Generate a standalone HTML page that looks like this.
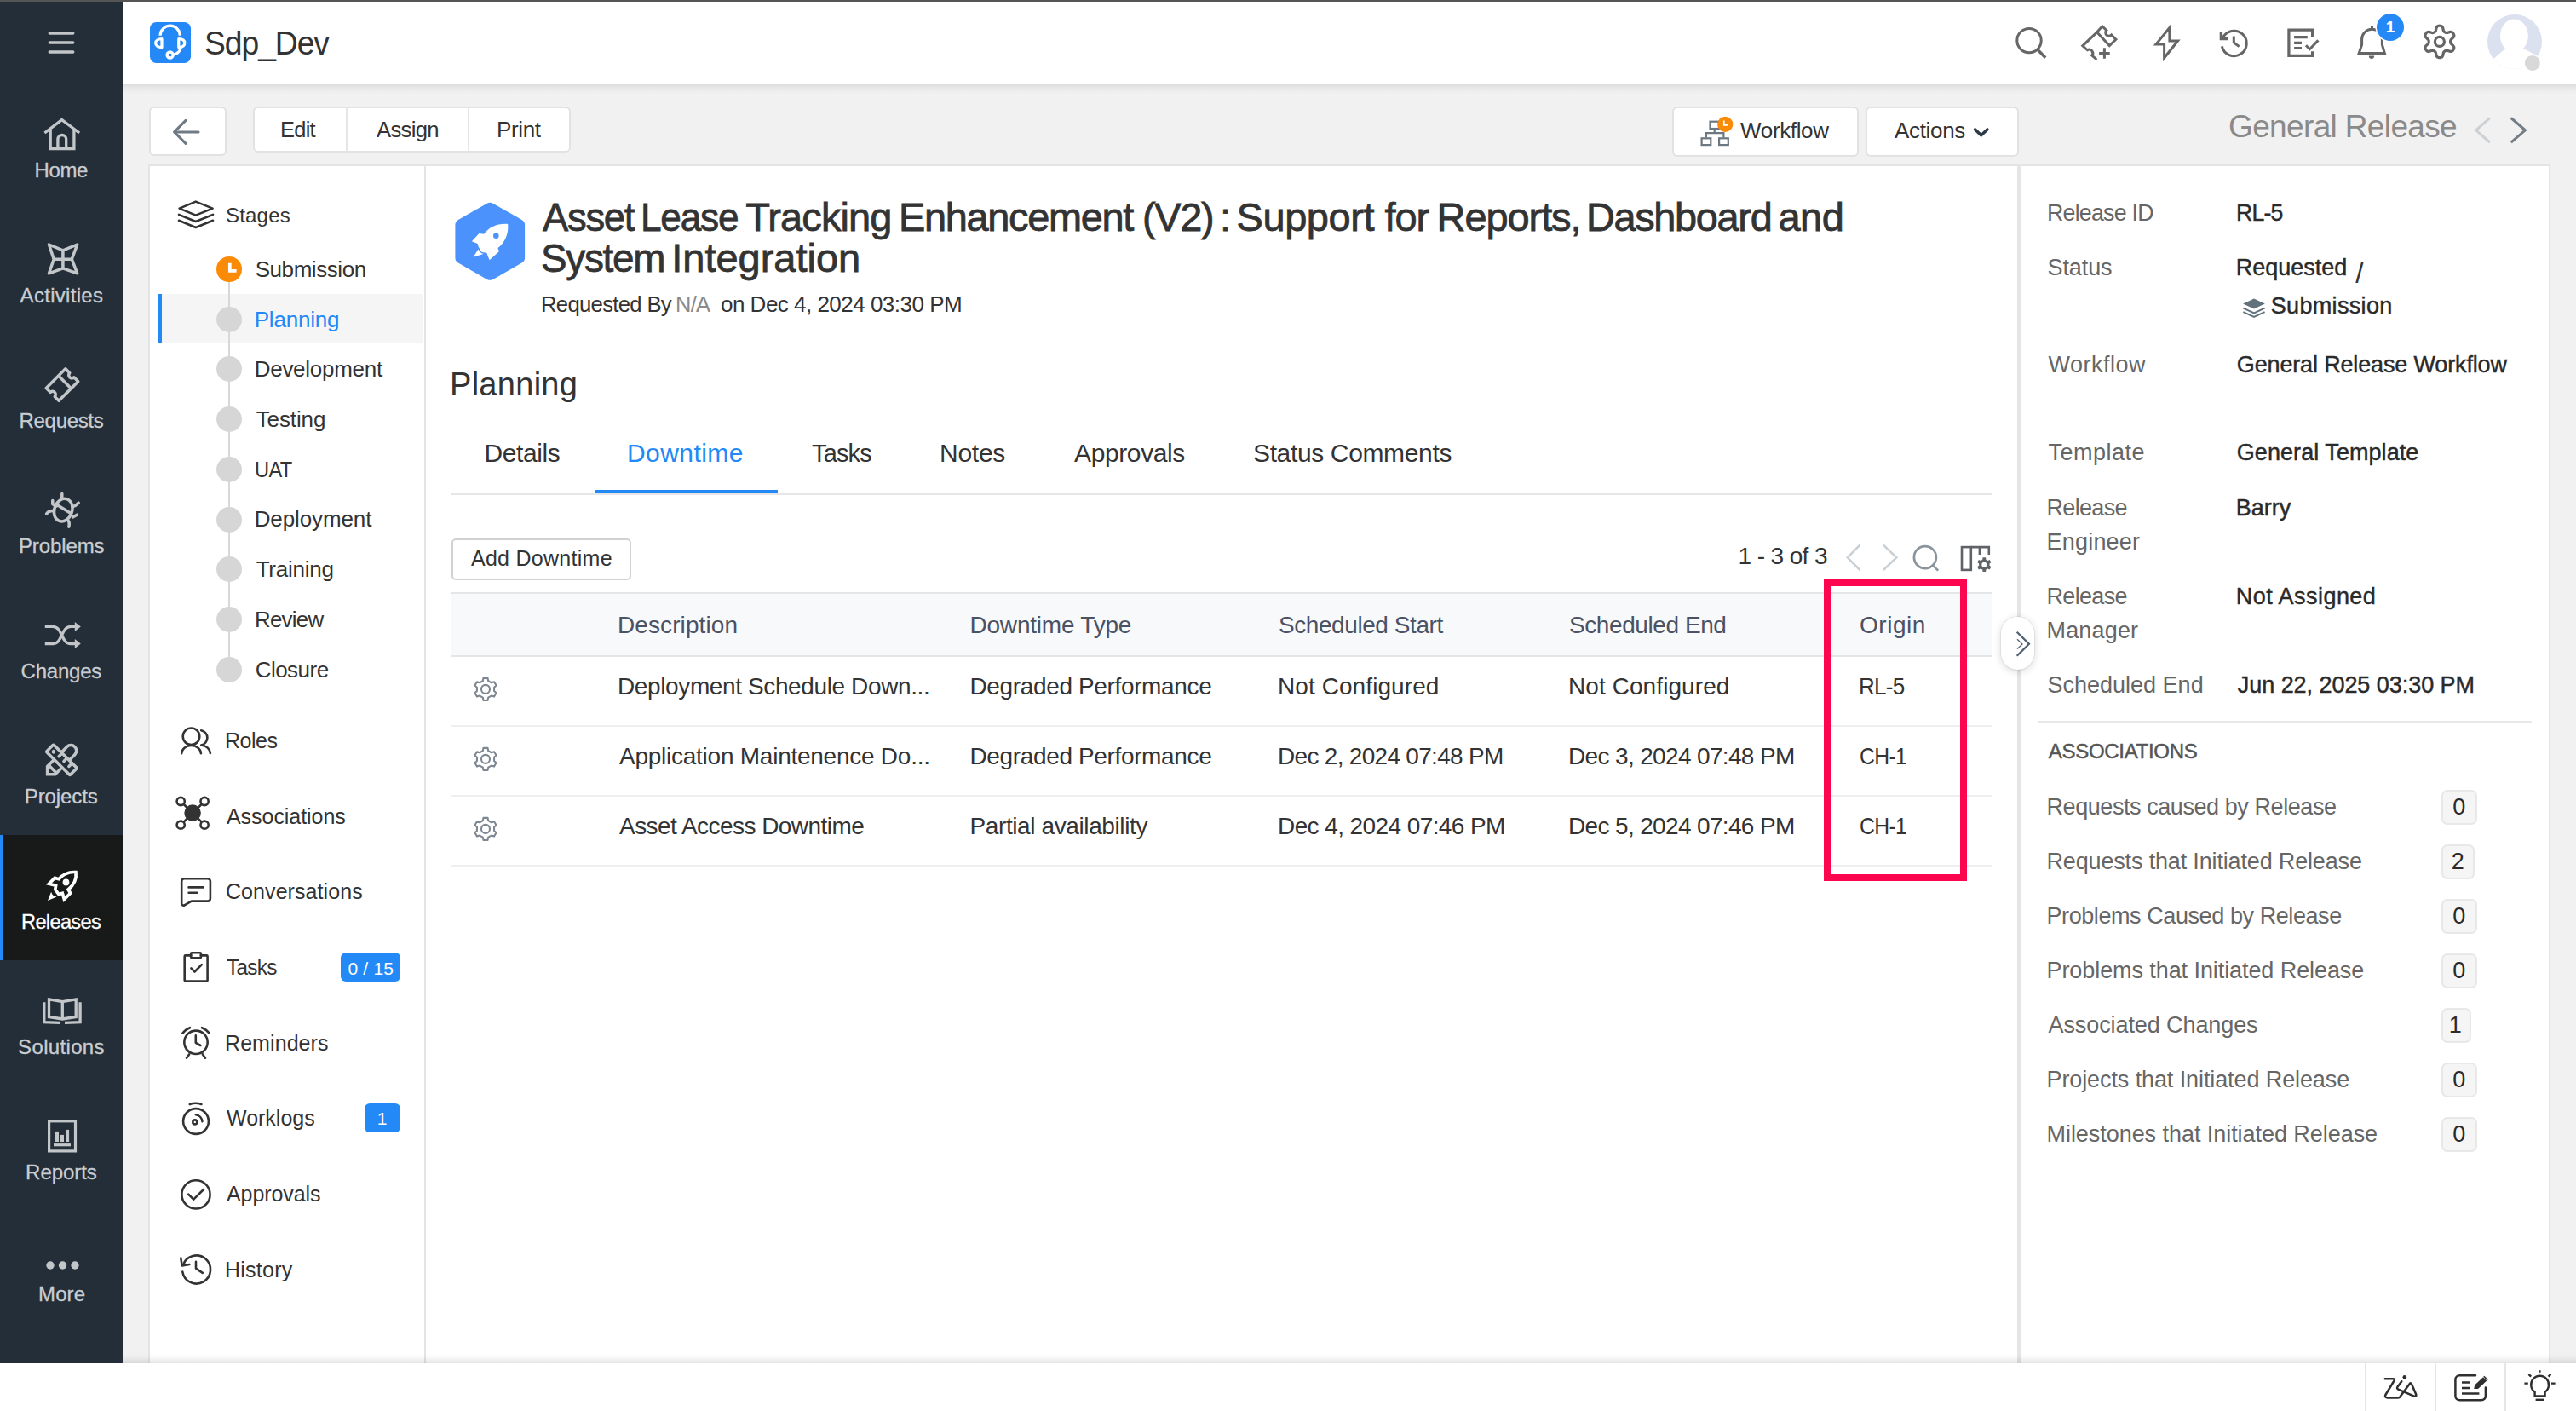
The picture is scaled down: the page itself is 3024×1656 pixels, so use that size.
<!DOCTYPE html>
<html lang="en"><head><meta charset="utf-8"><title>Sdp_Dev - Release RL-5</title>
<style>
html,body{margin:0;padding:0;}
body{width:3024px;height:1656px;overflow:hidden;background:#f1f1f1;font-family:"Liberation Sans",sans-serif;position:relative;}
.b{position:absolute;box-sizing:border-box;display:block;}
.t{position:absolute;white-space:nowrap;}
@media (max-width:1600px){html{zoom:0.5;}}
</style></head><body>
<div class="b" style="left:144px;top:0px;width:2880px;height:98px;background:#fff;"></div>
<div class="b" style="left:144px;top:98px;width:2880px;height:13px;background:linear-gradient(to bottom, rgba(0,0,0,0.095), rgba(0,0,0,0.045) 35%, rgba(0,0,0,0.012) 75%, rgba(0,0,0,0));"></div>
<div class="b" style="left:0px;top:0px;width:3024px;height:2px;background:#555;"></div>
<div class="b" style="left:0px;top:2px;width:144px;height:1598px;background:#242e38;"></div>
<div class="b" style="left:0px;top:980px;width:144px;height:147px;background:#181a1a;"></div>
<div class="b" style="left:0px;top:980px;width:4px;height:147px;background:#2289f6;"></div>
<div class="t" style="left:40.6px;top:188.3px;font-size:24px;line-height:24px;letter-spacing:-0.43px;color:#c9cdd1;-webkit-text-stroke:0.3px #c9cdd1;">Home</div>
<div class="t" style="left:23.6px;top:335.3px;font-size:24px;line-height:24px;letter-spacing:0.30px;color:#c9cdd1;-webkit-text-stroke:0.3px #c9cdd1;">Activities</div>
<div class="t" style="left:22.6px;top:482.3px;font-size:24px;line-height:24px;letter-spacing:-0.33px;color:#c9cdd1;-webkit-text-stroke:0.3px #c9cdd1;">Requests</div>
<div class="t" style="left:21.9px;top:629.3px;font-size:24px;line-height:24px;letter-spacing:-0.10px;color:#c9cdd1;-webkit-text-stroke:0.3px #c9cdd1;">Problems</div>
<div class="t" style="left:24.6px;top:776.3px;font-size:24px;line-height:24px;letter-spacing:-0.22px;color:#c9cdd1;-webkit-text-stroke:0.3px #c9cdd1;">Changes</div>
<div class="t" style="left:28.8px;top:923.3px;font-size:24px;line-height:24px;letter-spacing:-0.09px;color:#c9cdd1;-webkit-text-stroke:0.3px #c9cdd1;">Projects</div>
<div class="t" style="left:25.2px;top:1070.3px;font-size:24px;line-height:24px;letter-spacing:-0.67px;color:#fff;transform:scaleX(0.9831);transform-origin:0 0;-webkit-text-stroke:0.3px #fff;">Releases</div>
<div class="t" style="left:21.1px;top:1217.3px;font-size:24px;line-height:24px;letter-spacing:0.34px;color:#c9cdd1;-webkit-text-stroke:0.3px #c9cdd1;">Solutions</div>
<div class="t" style="left:30.1px;top:1364.3px;font-size:24px;line-height:24px;letter-spacing:-0.05px;color:#c9cdd1;-webkit-text-stroke:0.3px #c9cdd1;">Reports</div>
<div class="t" style="left:45.1px;top:1507.3px;font-size:24px;line-height:24px;letter-spacing:0.07px;color:#c9cdd1;-webkit-text-stroke:0.3px #c9cdd1;">More</div>
<div class="t" style="left:240.0px;top:30.6px;font-size:39px;line-height:39px;letter-spacing:-1.09px;color:#333;transform:scaleX(0.9547);transform-origin:0 0;">Sdp_Dev</div>
<div class="b" style="left:174.5px;top:124.5px;width:91px;height:58px;background:#fff;border:2px solid #e2e2e2;border-radius:6px;"></div>
<div class="b" style="left:296.5px;top:124.6px;width:373px;height:54px;background:#fff;border:2px solid #e2e2e2;border-radius:6px;"></div>
<div class="b" style="left:406.2px;top:124.6px;width:2px;height:54px;background:#e6e6e6;"></div>
<div class="b" style="left:549.4px;top:124.6px;width:2px;height:54px;background:#e6e6e6;"></div>
<div class="t" style="left:329.1px;top:138.9px;font-size:26px;line-height:26px;letter-spacing:-0.73px;color:#333;transform:scaleX(0.9781);transform-origin:0 0;">Edit</div>
<div class="t" style="left:442.2px;top:138.9px;font-size:26px;line-height:26px;letter-spacing:-0.73px;color:#333;transform:scaleX(0.9883);transform-origin:0 0;">Assign</div>
<div class="t" style="left:583.0px;top:138.9px;font-size:26px;line-height:26px;letter-spacing:-0.38px;color:#333;">Print</div>
<div class="b" style="left:1962.5px;top:124.5px;width:219px;height:59px;background:#fff;border:2px solid #e2e2e2;border-radius:6px;"></div>
<div class="b" style="left:2189.5px;top:124.5px;width:180px;height:59px;background:#fff;border:2px solid #e2e2e2;border-radius:6px;"></div>
<div class="t" style="left:2043.1px;top:140.4px;font-size:26px;line-height:26px;letter-spacing:-0.36px;color:#333;">Workflow</div>
<div class="t" style="left:2224.1px;top:140.4px;font-size:26px;line-height:26px;letter-spacing:-0.35px;color:#333;">Actions</div>
<div class="t" style="left:2616.0px;top:130.3px;font-size:37px;line-height:37px;letter-spacing:-0.64px;color:#8a8a8a;">General Release</div>
<div class="b" style="left:174px;top:193px;width:2820px;height:1407px;background:#fff;border:2px solid #e4e4e4;border-bottom:none;"></div>
<div class="b" style="left:498px;top:195px;width:2px;height:1405px;background:#e4e4e4;"></div>
<div class="b" style="left:2368px;top:195px;width:4px;height:1405px;background:#e5e5e5;"></div>
<div class="t" style="left:265.0px;top:241.3px;font-size:24px;line-height:24px;letter-spacing:0.20px;color:#333;">Stages</div>
<div class="b" style="left:185px;top:345px;width:311px;height:58px;background:#f5f5f5;"></div>
<div class="b" style="left:185px;top:345px;width:5px;height:58px;background:#2289f6;"></div>
<div class="b" style="left:268px;top:316px;width:2.4px;height:470px;background:#d8d8d8;"></div>
<div class="t" style="left:299.7px;top:302.9px;font-size:26px;line-height:26px;letter-spacing:-0.44px;color:#333;">Submission</div>
<div class="t" style="left:298.7px;top:361.6px;font-size:26px;line-height:26px;letter-spacing:-0.19px;color:#2289f6;">Planning</div>
<div class="b" style="left:254px;top:359.7px;width:30px;height:30px;background:#d6d6d6;border-radius:50%;"></div>
<div class="t" style="left:298.7px;top:420.3px;font-size:26px;line-height:26px;letter-spacing:-0.27px;color:#333;">Development</div>
<div class="b" style="left:254px;top:418.4px;width:30px;height:30px;background:#d6d6d6;border-radius:50%;"></div>
<div class="t" style="left:300.7px;top:479.0px;font-size:26px;line-height:26px;letter-spacing:-0.12px;color:#333;">Testing</div>
<div class="b" style="left:254px;top:477.1px;width:30px;height:30px;background:#d6d6d6;border-radius:50%;"></div>
<div class="t" style="left:298.9px;top:537.7px;font-size:26px;line-height:26px;letter-spacing:-0.73px;color:#333;transform:scaleX(0.9088);transform-origin:0 0;">UAT</div>
<div class="b" style="left:254px;top:535.8px;width:30px;height:30px;background:#d6d6d6;border-radius:50%;"></div>
<div class="t" style="left:298.7px;top:596.4px;font-size:26px;line-height:26px;letter-spacing:-0.11px;color:#333;">Deployment</div>
<div class="b" style="left:254px;top:594.5px;width:30px;height:30px;background:#d6d6d6;border-radius:50%;"></div>
<div class="t" style="left:300.7px;top:655.1px;font-size:26px;line-height:26px;letter-spacing:-0.24px;color:#333;">Training</div>
<div class="b" style="left:254px;top:653.2px;width:30px;height:30px;background:#d6d6d6;border-radius:50%;"></div>
<div class="t" style="left:298.7px;top:713.8px;font-size:26px;line-height:26px;letter-spacing:-0.73px;color:#333;transform:scaleX(0.9942);transform-origin:0 0;">Review</div>
<div class="b" style="left:254px;top:711.9000000000001px;width:30px;height:30px;background:#d6d6d6;border-radius:50%;"></div>
<div class="t" style="left:299.7px;top:772.5px;font-size:26px;line-height:26px;letter-spacing:-0.53px;color:#333;">Closure</div>
<div class="b" style="left:254px;top:770.6px;width:30px;height:30px;background:#d6d6d6;border-radius:50%;"></div>
<div class="b" style="left:254.2px;top:301px;width:29.8px;height:29.8px;background:#fb8a07;border-radius:50%;"></div>
<div class="t" style="left:264.0px;top:856.9px;font-size:25px;line-height:25px;letter-spacing:-0.50px;color:#333;">Roles</div>
<div class="t" style="left:266.0px;top:945.7px;font-size:25px;line-height:25px;letter-spacing:-0.05px;color:#333;">Associations</div>
<div class="t" style="left:265.0px;top:1034.4px;font-size:25px;line-height:25px;letter-spacing:0.07px;color:#333;">Conversations</div>
<div class="t" style="left:266.0px;top:1123.1px;font-size:25px;line-height:25px;letter-spacing:-0.70px;color:#333;transform:scaleX(0.9718);transform-origin:0 0;">Tasks</div>
<div class="t" style="left:264.0px;top:1211.7px;font-size:25px;line-height:25px;letter-spacing:0.08px;color:#333;">Reminders</div>
<div class="t" style="left:266.0px;top:1300.4px;font-size:25px;line-height:25px;letter-spacing:0.00px;color:#333;">Worklogs</div>
<div class="t" style="left:266.0px;top:1389.1px;font-size:25px;line-height:25px;letter-spacing:-0.09px;color:#333;">Approvals</div>
<div class="t" style="left:264.0px;top:1477.7px;font-size:25px;line-height:25px;letter-spacing:0.25px;color:#333;">History</div>
<div class="b" style="left:400px;top:1118px;width:70px;height:34px;background:#2289f6;border-radius:6px;"></div>
<div class="t" style="left:408.5px;top:1125.8px;font-size:21px;line-height:21px;letter-spacing:0.18px;color:#fff;">0 / 15</div>
<div class="b" style="left:428px;top:1295px;width:42px;height:34px;background:#2289f6;border-radius:6px;"></div>
<div class="t" style="left:442.8px;top:1302.3px;font-size:21px;line-height:21px;letter-spacing:0.00px;color:#fff;">1</div>
<div class="t" style="left:637.0px;top:230.8px;font-size:47px;line-height:47px;letter-spacing:-1.32px;color:#333;transform:scaleX(0.9657);transform-origin:0 0;-webkit-text-stroke:0.8px #333;">Asset</div>
<div class="t" style="left:751.9px;top:230.8px;font-size:47px;line-height:47px;letter-spacing:-1.32px;color:#333;transform:scaleX(0.9407);transform-origin:0 0;-webkit-text-stroke:0.8px #333;">Lease</div>
<div class="t" style="left:875.2px;top:230.8px;font-size:47px;line-height:47px;letter-spacing:-0.89px;color:#333;-webkit-text-stroke:0.8px #333;">Tracking</div>
<div class="t" style="left:1055.2px;top:230.8px;font-size:47px;line-height:47px;letter-spacing:-1.32px;color:#333;transform:scaleX(0.9980);transform-origin:0 0;-webkit-text-stroke:0.8px #333;">Enhancement</div>
<div class="t" style="left:1340.8px;top:230.8px;font-size:47px;line-height:47px;letter-spacing:-1.32px;color:#333;transform:scaleX(0.9969);transform-origin:0 0;-webkit-text-stroke:0.8px #333;">(V2)</div>
<div class="t" style="left:1431.9px;top:230.8px;font-size:47px;line-height:47px;letter-spacing:0.00px;color:#333;-webkit-text-stroke:0.8px #333;">:</div>
<div class="t" style="left:1451.6px;top:230.8px;font-size:47px;line-height:47px;letter-spacing:-0.45px;color:#333;-webkit-text-stroke:0.8px #333;">Support</div>
<div class="t" style="left:1625.6px;top:230.8px;font-size:47px;line-height:47px;letter-spacing:-1.20px;color:#333;-webkit-text-stroke:0.8px #333;">for</div>
<div class="t" style="left:1686.6px;top:230.8px;font-size:47px;line-height:47px;letter-spacing:-1.09px;color:#333;-webkit-text-stroke:0.8px #333;">Reports,</div>
<div class="t" style="left:1862.1px;top:230.8px;font-size:47px;line-height:47px;letter-spacing:-1.32px;color:#333;transform:scaleX(0.9969);transform-origin:0 0;-webkit-text-stroke:0.8px #333;">Dashboard</div>
<div class="t" style="left:2087.4px;top:230.8px;font-size:47px;line-height:47px;letter-spacing:-0.50px;color:#333;-webkit-text-stroke:0.8px #333;">and</div>
<div class="t" style="left:635.0px;top:278.8px;font-size:47px;line-height:47px;letter-spacing:-1.32px;color:#333;transform:scaleX(0.9760);transform-origin:0 0;-webkit-text-stroke:0.8px #333;">System</div>
<div class="t" style="left:788.3px;top:278.8px;font-size:47px;line-height:47px;letter-spacing:-0.02px;color:#333;-webkit-text-stroke:0.8px #333;">Integration</div>
<div class="t" style="left:634.6px;top:343.6px;font-size:26px;line-height:26px;letter-spacing:-0.73px;color:#333;transform:scaleX(0.9896);transform-origin:0 0;">Requested By</div>
<div class="t" style="left:793.0px;top:343.6px;font-size:26px;line-height:26px;letter-spacing:-0.73px;color:#8a8a8a;transform:scaleX(0.9767);transform-origin:0 0;">N/A</div>
<div class="t" style="left:846.0px;top:343.6px;font-size:26px;line-height:26px;letter-spacing:-0.51px;color:#333;">on Dec 4, 2024 03:30 PM</div>
<div class="t" style="left:528.0px;top:432.4px;font-size:38px;line-height:38px;letter-spacing:0.29px;color:#333;">Planning</div>
<div class="t" style="left:568.6px;top:516.8px;font-size:30px;line-height:30px;letter-spacing:-0.43px;color:#333;">Details</div>
<div class="t" style="left:736.0px;top:516.8px;font-size:30px;line-height:30px;letter-spacing:0.43px;color:#2289f6;">Downtime</div>
<div class="t" style="left:953.0px;top:516.8px;font-size:30px;line-height:30px;letter-spacing:-0.84px;color:#333;transform:scaleX(0.9637);transform-origin:0 0;">Tasks</div>
<div class="t" style="left:1103.0px;top:516.8px;font-size:30px;line-height:30px;letter-spacing:-0.25px;color:#333;">Notes</div>
<div class="t" style="left:1261.0px;top:516.8px;font-size:30px;line-height:30px;letter-spacing:-0.38px;color:#333;">Approvals</div>
<div class="t" style="left:1471.0px;top:516.8px;font-size:30px;line-height:30px;letter-spacing:-0.36px;color:#333;">Status Comments</div>
<div class="b" style="left:530px;top:579px;width:1808px;height:2px;background:#e6e6e6;"></div>
<div class="b" style="left:698px;top:575px;width:215px;height:4px;background:#2289f6;"></div>
<div class="b" style="left:530px;top:631.5px;width:211px;height:49px;background:#fff;border:2px solid #d2d2d2;border-radius:5px;"></div>
<div class="t" style="left:553.0px;top:643.4px;font-size:25px;line-height:25px;letter-spacing:0.27px;color:#333;">Add Downtime</div>
<div class="t" style="left:2040.5px;top:638.9px;font-size:28px;line-height:28px;letter-spacing:-0.61px;color:#333;">1 - 3 of 3</div>
<div class="b" style="left:530px;top:695px;width:1808px;height:76px;background:#f8f9fa;border-top:2px solid #e4e5e7;border-bottom:2px solid #e4e5e7;"></div>
<div class="t" style="left:725.0px;top:719.9px;font-size:28px;line-height:28px;letter-spacing:0.10px;color:#4b5264;">Description</div>
<div class="t" style="left:1138.5px;top:719.9px;font-size:28px;line-height:28px;letter-spacing:-0.21px;color:#4b5264;">Downtime Type</div>
<div class="t" style="left:1501.0px;top:719.9px;font-size:28px;line-height:28px;letter-spacing:-0.43px;color:#4b5264;">Scheduled Start</div>
<div class="t" style="left:1842.0px;top:719.9px;font-size:28px;line-height:28px;letter-spacing:-0.42px;color:#4b5264;">Scheduled End</div>
<div class="t" style="left:2183.0px;top:719.9px;font-size:28px;line-height:28px;letter-spacing:0.54px;color:#4b5264;">Origin</div>
<div class="t" style="left:725.0px;top:792.4px;font-size:28px;line-height:28px;letter-spacing:-0.38px;color:#333;">Deployment Schedule Down...</div>
<div class="t" style="left:1138.5px;top:792.4px;font-size:28px;line-height:28px;letter-spacing:-0.36px;color:#333;">Degraded Performance</div>
<div class="t" style="left:1500.0px;top:792.4px;font-size:28px;line-height:28px;letter-spacing:0.08px;color:#333;">Not Configured</div>
<div class="t" style="left:1841.0px;top:792.4px;font-size:28px;line-height:28px;letter-spacing:0.08px;color:#333;">Not Configured</div>
<div class="t" style="left:2182.1px;top:792.4px;font-size:28px;line-height:28px;letter-spacing:-0.78px;color:#333;transform:scaleX(0.9309);transform-origin:0 0;">RL-5</div>
<div class="b" style="left:530px;top:851px;width:1808px;height:2px;background:#efefef;"></div>
<div class="t" style="left:727.0px;top:874.4px;font-size:28px;line-height:28px;letter-spacing:-0.25px;color:#333;">Application Maintenence Do...</div>
<div class="t" style="left:1138.5px;top:874.4px;font-size:28px;line-height:28px;letter-spacing:-0.36px;color:#333;">Degraded Performance</div>
<div class="t" style="left:1500.0px;top:874.4px;font-size:28px;line-height:28px;letter-spacing:-0.70px;color:#333;">Dec 2, 2024 07:48 PM</div>
<div class="t" style="left:1841.0px;top:874.4px;font-size:28px;line-height:28px;letter-spacing:-0.65px;color:#333;">Dec 3, 2024 07:48 PM</div>
<div class="t" style="left:2183.1px;top:874.4px;font-size:28px;line-height:28px;letter-spacing:-0.78px;color:#333;transform:scaleX(0.8841);transform-origin:0 0;">CH-1</div>
<div class="b" style="left:530px;top:933px;width:1808px;height:2px;background:#efefef;"></div>
<div class="t" style="left:727.0px;top:956.4px;font-size:28px;line-height:28px;letter-spacing:-0.55px;color:#333;">Asset Access Downtime</div>
<div class="t" style="left:1138.5px;top:956.4px;font-size:28px;line-height:28px;letter-spacing:-0.39px;color:#333;">Partial availability</div>
<div class="t" style="left:1500.0px;top:956.4px;font-size:28px;line-height:28px;letter-spacing:-0.59px;color:#333;">Dec 4, 2024 07:46 PM</div>
<div class="t" style="left:1841.0px;top:956.4px;font-size:28px;line-height:28px;letter-spacing:-0.65px;color:#333;">Dec 5, 2024 07:46 PM</div>
<div class="t" style="left:2183.1px;top:956.4px;font-size:28px;line-height:28px;letter-spacing:-0.78px;color:#333;transform:scaleX(0.8841);transform-origin:0 0;">CH-1</div>
<div class="b" style="left:530px;top:1015px;width:1808px;height:2px;background:#efefef;"></div>
<div class="b" style="left:2140.8px;top:680.3px;width:168px;height:353.5px;border:8.5px solid #fc074f;"></div>
<div class="b" style="left:2349.3px;top:724px;width:39px;height:61.6px;background:#fff;border-radius:19.5px;box-shadow:0 0 0 1px rgba(0,0,0,0.05),0 2px 10px rgba(0,0,0,0.16);"></div>
<div class="t" style="left:2402.5px;top:236.7px;font-size:27px;line-height:27px;letter-spacing:-0.76px;color:#666;transform:scaleX(0.9904);transform-origin:0 0;">Release ID</div>
<div class="t" style="left:2624.9px;top:236.7px;font-size:27px;line-height:27px;letter-spacing:-0.76px;color:#2a2a2a;transform:scaleX(0.9854);transform-origin:0 0;-webkit-text-stroke:0.45px #2a2a2a;">RL-5</div>
<div class="t" style="left:2403.5px;top:300.7px;font-size:27px;line-height:27px;letter-spacing:-0.10px;color:#666;">Status</div>
<div class="t" style="left:2624.8px;top:300.7px;font-size:27px;line-height:27px;letter-spacing:-0.01px;color:#2a2a2a;-webkit-text-stroke:0.45px #2a2a2a;">Requested</div>
<div class="t" style="left:2765.3px;top:304.2px;font-size:33px;line-height:33px;letter-spacing:0.00px;color:#333;">/</div>
<div class="t" style="left:2665.7px;top:346.0px;font-size:27px;line-height:27px;letter-spacing:0.34px;color:#2a2a2a;-webkit-text-stroke:0.45px #2a2a2a;">Submission</div>
<div class="t" style="left:2404.5px;top:414.7px;font-size:27px;line-height:27px;letter-spacing:0.50px;color:#666;">Workflow</div>
<div class="t" style="left:2625.8px;top:414.7px;font-size:27px;line-height:27px;letter-spacing:-0.15px;color:#2a2a2a;-webkit-text-stroke:0.45px #2a2a2a;">General Release Workflow</div>
<div class="t" style="left:2404.5px;top:518.2px;font-size:27px;line-height:27px;letter-spacing:0.50px;color:#666;">Template</div>
<div class="t" style="left:2625.8px;top:518.2px;font-size:27px;line-height:27px;letter-spacing:0.06px;color:#2a2a2a;-webkit-text-stroke:0.45px #2a2a2a;">General Template</div>
<div class="t" style="left:2402.5px;top:582.5px;font-size:27px;line-height:27px;letter-spacing:-0.67px;color:#666;">Release</div>
<div class="t" style="left:2624.8px;top:582.5px;font-size:27px;line-height:27px;letter-spacing:-0.01px;color:#2a2a2a;-webkit-text-stroke:0.45px #2a2a2a;">Barry</div>
<div class="t" style="left:2402.5px;top:622.5px;font-size:27px;line-height:27px;letter-spacing:0.21px;color:#666;">Engineer</div>
<div class="t" style="left:2402.5px;top:686.7px;font-size:27px;line-height:27px;letter-spacing:-0.67px;color:#666;">Release</div>
<div class="t" style="left:2624.8px;top:686.7px;font-size:27px;line-height:27px;letter-spacing:0.45px;color:#2a2a2a;-webkit-text-stroke:0.45px #2a2a2a;">Not Assigned</div>
<div class="t" style="left:2402.5px;top:726.7px;font-size:27px;line-height:27px;letter-spacing:0.17px;color:#666;">Manager</div>
<div class="t" style="left:2403.5px;top:790.7px;font-size:27px;line-height:27px;letter-spacing:0.00px;color:#666;">Scheduled End</div>
<div class="t" style="left:2626.8px;top:790.7px;font-size:27px;line-height:27px;letter-spacing:-0.05px;color:#2a2a2a;-webkit-text-stroke:0.45px #2a2a2a;">Jun 22, 2025 03:30 PM</div>
<div class="b" style="left:2392px;top:846px;width:580px;height:2px;background:#e8e8e8;"></div>
<div class="t" style="left:2404.8px;top:869.6px;font-size:24px;line-height:24px;letter-spacing:-0.30px;color:#555;-webkit-text-stroke:0.5px #555;">ASSOCIATIONS</div>
<div class="t" style="left:2402.5px;top:934.0px;font-size:27px;line-height:27px;letter-spacing:-0.43px;color:#666;">Requests caused by Release</div>
<div class="b" style="left:2866px;top:926.5px;width:41.5px;height:41px;background:#f5f5f5;border:2px solid #e8e8e8;border-radius:7px;"></div>
<div class="t" style="left:2879.2px;top:934.0px;font-size:27px;line-height:27px;letter-spacing:0.00px;color:#2a2a2a;">0</div>
<div class="t" style="left:2402.5px;top:998.0px;font-size:27px;line-height:27px;letter-spacing:-0.16px;color:#666;">Requests that Initiated Release</div>
<div class="b" style="left:2866px;top:990.5px;width:38.7px;height:41px;background:#f5f5f5;border:2px solid #e8e8e8;border-radius:7px;"></div>
<div class="t" style="left:2877.8px;top:998.0px;font-size:27px;line-height:27px;letter-spacing:0.00px;color:#2a2a2a;">2</div>
<div class="t" style="left:2402.5px;top:1062.0px;font-size:27px;line-height:27px;letter-spacing:-0.42px;color:#666;">Problems Caused by Release</div>
<div class="b" style="left:2866px;top:1054.5px;width:41.5px;height:41px;background:#f5f5f5;border:2px solid #e8e8e8;border-radius:7px;"></div>
<div class="t" style="left:2879.2px;top:1062.0px;font-size:27px;line-height:27px;letter-spacing:0.00px;color:#2a2a2a;">0</div>
<div class="t" style="left:2402.5px;top:1126.0px;font-size:27px;line-height:27px;letter-spacing:-0.08px;color:#666;">Problems that Initiated Release</div>
<div class="b" style="left:2866px;top:1118.5px;width:41.5px;height:41px;background:#f5f5f5;border:2px solid #e8e8e8;border-radius:7px;"></div>
<div class="t" style="left:2879.2px;top:1126.0px;font-size:27px;line-height:27px;letter-spacing:0.00px;color:#2a2a2a;">0</div>
<div class="t" style="left:2404.5px;top:1190.0px;font-size:27px;line-height:27px;letter-spacing:-0.09px;color:#666;">Associated Changes</div>
<div class="b" style="left:2866px;top:1182.5px;width:34.5px;height:41px;background:#f5f5f5;border:2px solid #e8e8e8;border-radius:7px;"></div>
<div class="t" style="left:2874.8px;top:1190.0px;font-size:27px;line-height:27px;letter-spacing:0.00px;color:#2a2a2a;">1</div>
<div class="t" style="left:2402.5px;top:1254.0px;font-size:27px;line-height:27px;letter-spacing:-0.10px;color:#666;">Projects that Initiated Release</div>
<div class="b" style="left:2866px;top:1246.5px;width:41.5px;height:41px;background:#f5f5f5;border:2px solid #e8e8e8;border-radius:7px;"></div>
<div class="t" style="left:2879.2px;top:1254.0px;font-size:27px;line-height:27px;letter-spacing:0.00px;color:#2a2a2a;">0</div>
<div class="t" style="left:2402.5px;top:1318.0px;font-size:27px;line-height:27px;letter-spacing:-0.05px;color:#666;">Milestones that Initiated Release</div>
<div class="b" style="left:2866px;top:1310.5px;width:41.5px;height:41px;background:#f5f5f5;border:2px solid #e8e8e8;border-radius:7px;"></div>
<div class="t" style="left:2879.2px;top:1318.0px;font-size:27px;line-height:27px;letter-spacing:0.00px;color:#2a2a2a;">0</div>
<div class="b" style="left:0px;top:1600px;width:3024px;height:56px;background:#fff;"></div>
<div class="b" style="left:144px;top:1588px;width:2880px;height:12px;background:linear-gradient(to bottom, rgba(0,0,0,0), rgba(0,0,0,0.02) 40%, rgba(0,0,0,0.10));"></div>
<div class="b" style="left:2776px;top:1600px;width:2px;height:56px;background:#e6e6e6;"></div>
<div class="b" style="left:2858px;top:1600px;width:2px;height:56px;background:#e6e6e6;"></div>
<div class="b" style="left:2940px;top:1600px;width:2px;height:56px;background:#e6e6e6;"></div>
<svg class="b" style="left:0px;top:20px;" width="144" height="1480" viewBox="0 20 144 1480" fill="none"><g stroke="#c3c6c9" stroke-width="3.5" stroke-linecap="round" stroke-linejoin="round" stroke-width="4.6"><path d="M58.3 39H85.7"/><path d="M58.3 50H85.7"/><path d="M58.3 61H85.7"/></g><g stroke="#c3c6c9" stroke-width="3.3" stroke-linecap="butt" stroke-linejoin="miter"><path d="M52.4 156 L72.6 140.6 L93.2 156"/><path d="M59.2 151.5V174.6H86.9V151.5"/><path d="M67.9 174.6V163.4a4.9 4.9 0 0 1 9.8 0V174.6"/></g><g stroke="#c3c6c9" stroke-width="3.5" stroke-linecap="round" stroke-linejoin="round" stroke-width="3.6"><path d="M57.5 287 L73.9 293.8 L90.7 287 L84.3 304.2 L90.7 320.8 L73.9 314.9 L57.5 320.8 L63.2 304.2 Z"/><path d="M73.9 293.8V314.9M63.2 304.2H84.3"/></g><g stroke="#c3c6c9" stroke-width="3.5" stroke-linecap="round" stroke-linejoin="round" transform="translate(73 451.6) rotate(-45)"><path d="M-16 -10.5H16V-3.6A3.6 3.6 0 0 0 16 3.6V10.5H-16V3.6A3.6 3.6 0 0 0 -16 -3.6Z"/><path d="M4.4 -10.5V10.5" stroke-linecap="butt"/></g><g stroke="#c3c6c9" stroke-width="3.5" stroke-linecap="round" stroke-linejoin="round" stroke-width="3.4"><ellipse cx="74.2" cy="598.6" rx="10.4" ry="13.6" transform="rotate(20 74.2 598.6)"/><path d="M67 592.6 L82.8 602.2"/><path d="M72.8 579.6 V584.5"/><path d="M61.8 587.6 V591.6 L66.2 594"/><path d="M54.6 603 C56.5 600.5 59 598.8 63.6 599.8"/><path d="M92.2 590.2 C90 592.5 88 594 85.4 594.6"/><path d="M90.4 604.2 L85.4 607"/><path d="M80.9 618.2 C81.6 615 81.8 612 79 609.8"/></g><g stroke="#c3c6c9" stroke-width="3.3" stroke-linecap="butt" stroke-linejoin="miter" stroke-width="3.5"><path d="M52.8 735.4H62C73.5 735.4 71.5 755.6 83 755.6H89"/><path d="M52.8 755.6H62C73.5 755.6 71.5 735.4 83 735.4H89"/></g><path d="M87.8 729.9 L94.8 735.4 L87.8 740.9Z M87.8 750.1 L94.8 755.6 L87.8 761.1Z" fill="#c3c6c9"/><g stroke="#c3c6c9" stroke-width="3.5" stroke-linecap="round" stroke-linejoin="round" stroke-width="3.4" transform="translate(55.6 908.7) rotate(-45)"><path d="M0 0 L6.5 -6.5 H39 A6.5 6.5 0 0 1 39 6.5 H6.5 Z" stroke-linejoin="miter"/><path d="M8.6 -6.5V6.5" stroke-linecap="butt"/></g><g stroke="#c3c6c9" stroke-width="3.5" stroke-linecap="round" stroke-linejoin="round" stroke-width="3.4" transform="translate(72.4 891.85) rotate(45)"><rect x="-19.5" y="-5.9" width="39" height="11.8" rx="1" fill="#242e38"/><circle cx="-13.5" cy="0" r="2.3" fill="#c3c6c9" stroke="none"/><path d="M-5.3 -5.9V-0.6M3 -5.9V-0.6M11.4 -5.9V-0.6"/></g><g stroke="#fff" stroke-width="3.7" stroke-linejoin="miter" stroke-linecap="round"><path d="M89 1023.6 C90.2 1032.5 86.5 1039 80.1 1044 L82.6 1048.3 L75.4 1055.5 L73.3 1048.3 L69 1049.6 L64.8 1044 L65.6 1039.3 L57.5 1037.2 L64.3 1030.4 L69 1031.7 C74 1026 81 1023 89 1023.6 Z"/></g><circle cx="77.5" cy="1035.5" r="3.9" fill="#fff"/><path d="M60.1 1046.8 C61 1050 63 1052 66.6 1052.6 L56 1057 Z" fill="#fff"/><g stroke="#c3c6c9" stroke-width="3.3" stroke-linecap="butt" stroke-linejoin="miter" stroke-width="2.9"><path d="M57.5 1172.9 L73.3 1175.6 L89.2 1172.9 V1193.5 L73.3 1196 L57.5 1193.5 Z"/><path d="M73.3 1175.6V1196"/></g><g stroke="#c3c6c9" stroke-width="3.3" stroke-linecap="butt" stroke-linejoin="miter" stroke-width="2.5"><path d="M51.8 1176.3V1199.7L70.7 1200.3"/><path d="M94.1 1176.3V1199.7L76 1200.3"/></g><rect x="57.6" y="1315.8" width="30.9" height="35.1" stroke="#c3c6c9" stroke-width="3.2"/><g fill="#c3c6c9"><rect x="65" y="1327.9" width="4" height="12.1"/><rect x="70.9" y="1331.9" width="4.1" height="8.1"/><rect x="77.1" y="1325.9" width="4" height="14.1"/><rect x="63" y="1342.1" width="20" height="3.2"/><circle cx="59" cy="1485" r="4.7"/><circle cx="73.5" cy="1485" r="4.7"/><circle cx="88" cy="1485" r="4.7"/></g></svg>
<svg class="b" style="left:170px;top:20px;" width="60" height="60" viewBox="170 20 60 60" fill="none"><rect x="176" y="26" width="48" height="48" rx="7.5" fill="#2488f7"/><g stroke="#fff" stroke-width="3.2" stroke-linecap="butt"><path d="M188.1 41.8A11.6 11.6 0 0 1 211.3 41.8"/><path d="M190 45.7V55.6C185.5 55.6 182.6 53.6 182.6 50.6S185.5 45.7 190 45.7Z" stroke-linejoin="round"/><path d="M209.8 45.7V55.6C214.3 55.6 216.8 53.6 216.8 50.6S214.3 45.7 209.8 45.7Z" stroke-linejoin="round"/><path d="M212.4 56.4C211 60.5 208 63 203.6 64"/><circle cx="199.6" cy="64.5" r="3.6"/></g></svg>
<svg class="b" style="left:2350px;top:8px;" width="660" height="84" viewBox="2350 8 660 84" fill="none"><g stroke="#666" stroke-width="3" stroke-linecap="butt" stroke-linejoin="miter"><circle cx="2382" cy="47.6" r="14.2"/><path d="M2392 58.2 L2401.2 67.8" stroke-width="3.4"/><path d="M2461.6 37.8 L2467.9 30.8 L2472.8 35.5 A3.9 3.9 0 0 0 2478.6 40.9 L2483.9 46.25 L2476.3 53.6 Z"/><path d="M2461.6 37.8 L2444.8 53.8 L2450.4 58.75 A4.2 4.2 0 0 1 2455.8 65 L2461.4 70"/><path d="M2470.4 56.2V68.8M2464.1 62.5H2476.7"/><path d="M2546.9 32.5 V48 H2556.6 L2540.6 68 V52.1 H2530.9 Z"/><path d="M2609.2 44.9 A14.7 14.7 0 1 1 2608.3 54.4"/><path d="M2607.4 37.8V45.6H2615.8" stroke-width="3.4"/><path d="M2622.3 42.5V50L2628.6 54.6"/><path d="M2714.6 44V35.1H2686.9V65.4H2714.6V60.3" stroke-width="3.2"/><path d="M2693.1 43.6H2708.8M2693.1 50.3H2702M2693.1 56.5H2702" stroke-width="3.2"/><path d="M2707 53.2 L2711.4 57.7 L2721.4 47.4"/><path d="M2769.2 62.6 L2772.6 52.5 V46.2 a11.9 11.9 0 0 1 23.8 0 V52.5 L2799.4 62.6 Z"/><path d="M2784.5 30.6V34.5"/></g><path d="M2780.8 65.6 H2787.2 A3.2 3.4 0 0 1 2780.8 65.6Z" fill="#666"/><circle cx="2806" cy="32" r="17.5" fill="#fff"/><circle cx="2806" cy="32" r="16" fill="#2488f7"/><path d="M2876.60 48.90 L2876.61 49.34 L2876.65 49.79 L2876.73 50.25 L2876.90 50.73 L2877.23 51.25 L2877.80 51.85 L2878.61 52.57 L2879.51 53.38 L2880.25 54.21 L2880.68 55.01 L2880.84 55.74 L2880.80 56.42 L2880.64 57.06 L2880.40 57.67 L2880.09 58.25 L2879.74 58.80 L2879.34 59.31 L2878.87 59.77 L2878.30 60.15 L2877.58 60.38 L2876.67 60.40 L2875.58 60.18 L2874.43 59.81 L2873.41 59.46 L2872.60 59.27 L2871.98 59.25 L2871.48 59.34 L2871.04 59.49 L2870.64 59.69 L2870.25 59.90 L2869.87 60.13 L2869.50 60.38 L2869.15 60.68 L2868.82 61.07 L2868.53 61.62 L2868.29 62.41 L2868.08 63.47 L2867.83 64.66 L2867.47 65.71 L2867.00 66.49 L2866.44 66.99 L2865.83 67.30 L2865.20 67.48 L2864.55 67.57 L2863.90 67.60 L2863.25 67.57 L2862.60 67.48 L2861.97 67.30 L2861.36 66.99 L2860.80 66.49 L2860.33 65.71 L2859.97 64.66 L2859.72 63.47 L2859.51 62.41 L2859.27 61.62 L2858.98 61.07 L2858.65 60.68 L2858.30 60.38 L2857.93 60.13 L2857.55 59.90 L2857.16 59.69 L2856.76 59.49 L2856.32 59.34 L2855.82 59.25 L2855.20 59.27 L2854.39 59.46 L2853.37 59.81 L2852.22 60.18 L2851.13 60.40 L2850.22 60.38 L2849.50 60.15 L2848.93 59.77 L2848.46 59.31 L2848.06 58.80 L2847.71 58.25 L2847.40 57.67 L2847.16 57.06 L2847.00 56.42 L2846.96 55.74 L2847.12 55.01 L2847.55 54.21 L2848.29 53.38 L2849.19 52.57 L2850.00 51.85 L2850.57 51.25 L2850.90 50.73 L2851.07 50.25 L2851.15 49.79 L2851.19 49.34 L2851.20 48.90 L2851.19 48.46 L2851.15 48.01 L2851.07 47.55 L2850.90 47.07 L2850.57 46.55 L2850.00 45.95 L2849.19 45.23 L2848.29 44.42 L2847.55 43.59 L2847.12 42.79 L2846.96 42.06 L2847.00 41.38 L2847.16 40.74 L2847.40 40.13 L2847.71 39.55 L2848.06 39.00 L2848.46 38.49 L2848.93 38.03 L2849.50 37.65 L2850.22 37.42 L2851.13 37.40 L2852.22 37.62 L2853.37 37.99 L2854.39 38.34 L2855.20 38.53 L2855.82 38.55 L2856.32 38.46 L2856.76 38.31 L2857.16 38.11 L2857.55 37.90 L2857.93 37.67 L2858.30 37.42 L2858.65 37.12 L2858.98 36.73 L2859.27 36.18 L2859.51 35.39 L2859.72 34.33 L2859.97 33.14 L2860.33 32.09 L2860.80 31.31 L2861.36 30.81 L2861.97 30.50 L2862.60 30.32 L2863.25 30.23 L2863.90 30.20 L2864.55 30.23 L2865.20 30.32 L2865.83 30.50 L2866.44 30.81 L2867.00 31.31 L2867.47 32.09 L2867.83 33.14 L2868.08 34.33 L2868.29 35.39 L2868.53 36.18 L2868.82 36.73 L2869.15 37.12 L2869.50 37.42 L2869.87 37.67 L2870.25 37.90 L2870.64 38.11 L2871.04 38.31 L2871.48 38.46 L2871.98 38.55 L2872.60 38.53 L2873.41 38.34 L2874.43 37.99 L2875.58 37.62 L2876.67 37.40 L2877.58 37.42 L2878.30 37.65 L2878.87 38.03 L2879.34 38.49 L2879.74 39.00 L2880.09 39.55 L2880.40 40.13 L2880.64 40.74 L2880.80 41.38 L2880.84 42.06 L2880.68 42.79 L2880.25 43.59 L2879.51 44.42 L2878.61 45.23 L2877.80 45.95 L2877.23 46.55 L2876.90 47.07 L2876.73 47.55 L2876.65 48.01 L2876.61 48.46 Z" stroke="#666" stroke-width="3.2" stroke-linejoin="round"/><circle cx="2863.9" cy="48.9" r="5.5" stroke="#666" stroke-width="3.2"/><clipPath id="avc"><circle cx="2952" cy="49" r="32"/></clipPath><g clip-path="url(#avc)"><rect x="2918" y="15" width="70" height="70" fill="#dbe1ee"/><ellipse cx="2951.4" cy="42" rx="16.4" ry="19.6" fill="#fff"/><path d="M2941 57 L2926.5 69.8 L2926 90 H2985 L2979 65.8 L2962.5 57 Z" fill="#fff"/></g><circle cx="2972.8" cy="73.9" r="9" fill="#d8d8d8"/></svg>
<div class="t" style="left:2800px;top:21px;width:12px;text-align:center;font-size:19px;line-height:22px;font-weight:bold;color:#fff;">1</div>
<svg class="b" style="left:196px;top:134px;" width="46" height="42" viewBox="196 134 46 42" fill="none"><g stroke="#6f7a85" stroke-width="3" stroke-linecap="round" stroke-linejoin="round"><path d="M218 141.4 L204.6 154.9 L218 168.4"/><path d="M205 154.9H233"/></g></svg>
<svg class="b" style="left:1990px;top:134px;" width="48" height="40" viewBox="1990 134 48 40" fill="none"><g stroke="#6b7882" stroke-width="2.2"><rect x="1997.6" y="162.3" width="10.7" height="7.8"/><rect x="2018.1" y="162.3" width="10.7" height="7.8"/><rect x="2007.5" y="142.7" width="10.5" height="8.3"/><path d="M2012.7 151V156.1M2002.9 161.2V156.1H2023.4V161.2"/></g><circle cx="2025.2" cy="145.9" r="9.1" fill="#fb8a07"/><path d="M2023.8 141.4V146.9H2028" stroke="#fff" stroke-width="1.7"/></svg>
<svg class="b" style="left:2312px;top:146px;" width="28" height="20" viewBox="2312 146 28 20" fill="none"><path d="M2318.6 152 L2325.7 158.7 L2332.9 152" stroke="#2e3a46" stroke-width="3.6" stroke-linecap="round" stroke-linejoin="round"/></svg>
<svg class="b" style="left:2900px;top:132px;" width="72" height="42" viewBox="2900 132 72 42" fill="none"><path d="M2922.8 138.5 L2906.6 152.8 L2922.8 167.2" stroke="#cdd0d2" stroke-width="3"/><path d="M2947.8 138.5 L2964.4 152.8 L2947.8 167.2" stroke="#737d86" stroke-width="3"/></svg>
<svg class="b" style="left:204px;top:230px;" width="84" height="96" viewBox="204 230 84 96" fill="none"><g stroke="#333" stroke-width="2.6" stroke-linejoin="round" stroke-linecap="round"><path d="M210.6 244.6 L229.8 236.6 L249.6 244.6 L229.8 252.6 Z"/><path d="M210 251.9 L229.8 260 L250 251.9"/><path d="M210 258.8 L229.8 267 L250 258.8"/></g><path d="M269.8 308.8V317.9H277.6" stroke="#fff" stroke-width="3.7"/></svg>
<svg class="b" style="left:200px;top:846px;" width="56" height="670" viewBox="200 846 56 670" fill="none"><g stroke="#333" stroke-width="2.6" stroke-linecap="round" stroke-linejoin="round"><circle cx="224.5" cy="864.3" r="9.8"/><path d="M213.2 884.2 A11.35 9.2 0 0 1 235.9 884.2"/><path d="M236.2 857.2 A8.8 8.8 0 0 1 236.2 874.5"/><path d="M237 874.8 A10.6 10.2 0 0 1 246.9 884"/><path d="M212.2 940.5 L240.1 968.2 M240.1 940.5 L212.2 968.2"/><circle cx="212.2" cy="940.5" r="4.6" fill="#fff"/><circle cx="240.1" cy="940.5" r="4.6" fill="#fff"/><circle cx="212.2" cy="968.2" r="4.6" fill="#fff"/><circle cx="240.1" cy="968.2" r="4.6" fill="#fff"/><circle cx="226.1" cy="954.1" r="9.8" fill="#333" stroke="none"/><path d="M216.2 1031.2 H243.9 A3 3 0 0 1 246.9 1034.2 V1054.6 A3 3 0 0 1 243.9 1057.6 H224.7 L216.6 1062.3 A2.2 2.2 0 0 1 213.2 1060.4 V1034.2 A3 3 0 0 1 216.2 1031.2 Z"/><path d="M221.6 1041.4H238.4M221.6 1047.8H231.4"/><path d="M224.2 1121.4H217.7A1 1 0 0 0 216.7 1122.4V1150.5A1 1 0 0 0 217.7 1151.5H242.6A1 1 0 0 0 243.6 1150.5V1122.4A1 1 0 0 0 242.6 1121.4H235.9"/><rect x="224.2" y="1118.2" width="11.7" height="6" rx="1"/><path d="M224.4 1136.4 L228.5 1140.5 L236.8 1132.2"/><circle cx="230" cy="1223.3" r="13.7"/><path d="M214.3 1212.7 A19.2 19.2 0 0 1 223 1206.2"/><path d="M237 1206.2 A19.2 19.2 0 0 1 245.7 1212.7"/><path d="M222.1 1237.4 L219 1241.7 M237.9 1237.4 L241 1241.7"/><path d="M229.8 1215.4V1223.8L235.4 1227"/><circle cx="230" cy="1316" r="14.9"/><path d="M222.8 1296 Q229.6 1293.6 236.4 1296"/><circle cx="228.8" cy="1316.9" r="2.5"/><path d="M229.8 1308.2 A8.8 8.8 0 0 1 237.4 1316.2"/><circle cx="230" cy="1401.9" r="16.6"/><path d="M221.2 1401.6 L227.2 1407.7 L239 1396"/><path d="M215 1484.6 A16.5 16.5 0 1 1 214.3 1492.6"/><path d="M212.3 1476.6 L213.7 1485.4 L222.4 1484"/><path d="M230 1480.8V1488.6L237.8 1493.8"/></g></svg>
<svg class="b" style="left:528px;top:232px;" width="96" height="104" viewBox="528 232 96 104" fill="none"><path d="M575.2 244.8 L609.1 264.0 L609.1 302.5 L575.2 321.8 L541.4 302.5 L541.4 264.0 Z" fill="#4b92fc" stroke="#4b92fc" stroke-width="14" stroke-linejoin="round"/><path d="M596.2 262.9 C597.4 274 592.5 285 584.4 291 L586 295.1 L574.6 305.3 L571.3 296.7 L565.6 295.9 L561.6 289.4 L560.7 286.1 L553.8 283.3 L562.4 273.9 L568.1 274.7 C574 266.5 584 262 596.2 262.9 Z" fill="#fff"/><circle cx="582.3" cy="276.8" r="3.3" fill="#4b92fc"/><path d="M561.4 292.4 C562.5 295 564.5 297 567.5 297.9 L555.7 301.8 Z" fill="#fff"/></svg>
<svg class="b" style="left:552px;top:790px;" width="36" height="36" viewBox="552 790 36 36" fill="none"><path d="M566.82 799.10 L567.51 795.84 L572.49 795.84 L573.18 799.10 L576.89 801.25 L580.07 800.21 L582.56 804.53 L580.07 806.76 L580.07 811.04 L582.56 813.27 L580.07 817.59 L576.89 816.55 L573.18 818.70 L572.49 821.96 L567.51 821.96 L566.82 818.70 L563.11 816.55 L559.93 817.59 L557.44 813.27 L559.93 811.04 L559.93 806.76 L557.44 804.53 L559.93 800.21 L563.11 801.25 Z" stroke="#7d8892" stroke-width="2.1" stroke-linejoin="round"/><circle cx="570" cy="808.9" r="5" stroke="#7d8892" stroke-width="2.1"/></svg>
<svg class="b" style="left:552px;top:872px;" width="36" height="36" viewBox="552 872 36 36" fill="none"><path d="M566.82 881.10 L567.51 877.84 L572.49 877.84 L573.18 881.10 L576.89 883.25 L580.07 882.21 L582.56 886.53 L580.07 888.76 L580.07 893.04 L582.56 895.27 L580.07 899.59 L576.89 898.55 L573.18 900.70 L572.49 903.96 L567.51 903.96 L566.82 900.70 L563.11 898.55 L559.93 899.59 L557.44 895.27 L559.93 893.04 L559.93 888.76 L557.44 886.53 L559.93 882.21 L563.11 883.25 Z" stroke="#7d8892" stroke-width="2.1" stroke-linejoin="round"/><circle cx="570" cy="890.9" r="5" stroke="#7d8892" stroke-width="2.1"/></svg>
<svg class="b" style="left:552px;top:954px;" width="36" height="36" viewBox="552 954 36 36" fill="none"><path d="M566.82 963.10 L567.51 959.84 L572.49 959.84 L573.18 963.10 L576.89 965.25 L580.07 964.21 L582.56 968.53 L580.07 970.76 L580.07 975.04 L582.56 977.27 L580.07 981.59 L576.89 980.55 L573.18 982.70 L572.49 985.96 L567.51 985.96 L566.82 982.70 L563.11 980.55 L559.93 981.59 L557.44 977.27 L559.93 975.04 L559.93 970.76 L557.44 968.53 L559.93 964.21 L563.11 965.25 Z" stroke="#7d8892" stroke-width="2.1" stroke-linejoin="round"/><circle cx="570" cy="972.9" r="5" stroke="#7d8892" stroke-width="2.1"/></svg>
<svg class="b" style="left:2160px;top:632px;" width="184" height="44" viewBox="2160 632 184 44" fill="none"><path d="M2183.4 639.6 L2168.8 654.3 L2183.4 669" stroke="#c8cfd5" stroke-width="2.5"/><path d="M2210.9 639.6 L2226.3 654.3 L2210.9 669" stroke="#c8cfd5" stroke-width="2.5"/><circle cx="2259.9" cy="654.1" r="13" stroke="#8a949c" stroke-width="2.7"/><path d="M2268.8 663.4 L2275.2 669.6" stroke="#8a949c" stroke-width="2.7"/><g stroke="#5f6368" stroke-width="2.6"><rect x="2303" y="642.1" width="10.8" height="26.8"/><path d="M2313.8 642.1H2334.8V651M2323.9 642.1V651"/></g><path d="M2327.23 656.70 L2327.51 654.24 L2331.09 654.24 L2331.37 656.70 L2333.42 657.88 L2335.69 656.90 L2337.48 659.99 L2335.49 661.47 L2335.49 663.83 L2337.48 665.31 L2335.69 668.40 L2333.42 667.42 L2331.37 668.60 L2331.09 671.06 L2327.51 671.06 L2327.23 668.60 L2325.18 667.42 L2322.91 668.40 L2321.12 665.31 L2323.11 663.83 L2323.11 661.47 L2321.12 659.99 L2322.91 656.90 L2325.18 657.88 Z M2332.3 662.65 a3 3 0 1 0 -6 0 a3 3 0 1 0 6 0Z" fill="#5f6368" fill-rule="evenodd"/></svg>
<svg class="b" style="left:2360px;top:736px;" width="28" height="40" viewBox="2360 736 28 40" fill="none"><path d="M2367.7 741.8 L2381.9 755.7 L2367.7 769.8" stroke="#4f6172" stroke-width="2.3"/><path d="M2368 750.2 L2374 755.9 L2368 761.6" stroke="#4f6172" stroke-width="1.3"/></svg>
<svg class="b" style="left:2630px;top:346px;" width="32" height="30" viewBox="2630 346 32 30" fill="none"><path d="M2633.2 356.4 L2646 350.4 L2658.8 356.4 L2646 362.4 Z" fill="#62727d"/><path d="M2633.4 361.6 L2646 367.4 L2658.6 361.6 M2633.4 366.2 L2646 372 L2658.6 366.2" stroke="#62727d" stroke-width="2"/></svg>
<svg class="b" style="left:2790px;top:1604px;" width="220" height="48" viewBox="2790 1604 220 48" fill="none"><g stroke="#2f2f2f" stroke-width="2.5" stroke-linecap="round" stroke-linejoin="round"><path d="M2799.8 1618.2 H2809 Q2811.6 1618.2 2810.4 1620.6 L2800.4 1637 Q2799 1640.2 2802.4 1640.4 H2815 Q2816.8 1640.4 2817.8 1638.8 L2828.6 1624.2 Q2830.2 1622.2 2831.2 1624.8 L2836.2 1636.6 Q2837 1639.4 2834 1638.6 L2815.4 1630.6 Q2813.2 1629.4 2814.6 1627.4 L2819.3 1621.3"/></g><circle cx="2822.8" cy="1616.2" r="2.3" fill="#2f2f2f"/><g stroke="#2f2f2f" stroke-width="2.5" stroke-linecap="round" stroke-linejoin="round"><path d="M2906 1614.2 H2887.4 A5 5 0 0 0 2882.4 1619.2 V1638.3 A5 5 0 0 0 2887.4 1643.3 H2912.9 A5 5 0 0 0 2917.9 1638.3 V1628.6"/><path d="M2890 1622.6H2900M2890 1629H2900M2890 1635.4H2910.4" stroke-linecap="butt"/></g><path d="M2904.2 1630 L2905.2 1625.6 L2915 1616.2 L2919.2 1620.4 L2909 1630 Z" fill="#2f2f2f"/><path d="M2915.8 1615.2 L2920.2 1619.6" stroke="#2f2f2f" stroke-width="1.6"/><g stroke="#2f2f2f" stroke-width="2.4" stroke-linejoin="round"><path d="M2975.6 1638.4 V1633.6 A10.4 10.4 0 1 1 2987.6 1633.6 V1638.4 Z"/><path d="M2976.6 1642.8H2986.6"/><path d="M2981.4 1608.2V1610.8M2963.4 1623.6H2967.8M2995 1623.6H2999.6M2968.4 1612.8L2971.2 1615.6M2994.4 1612.8L2991.6 1615.6"/></g></svg>
</body></html>
